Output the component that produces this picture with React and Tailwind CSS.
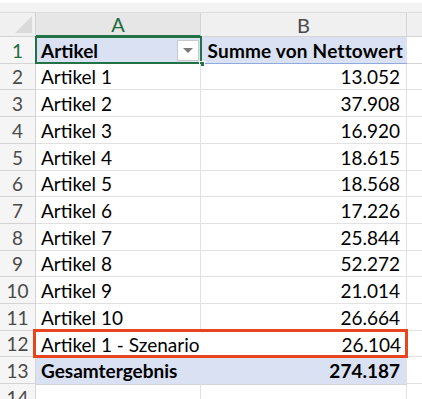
import React from 'react';

const rows = [
  ['Artikel 1', '13.052'],
  ['Artikel 2', '37.908'],
  ['Artikel 3', '16.920'],
  ['Artikel 4', '18.615'],
  ['Artikel 5', '18.568'],
  ['Artikel 6', '17.226'],
  ['Artikel 7', '25.844'],
  ['Artikel 8', '52.272'],
  ['Artikel 9', '21.014'],
  ['Artikel 10', '26.664'],
  ['Artikel 1 - Szenario', '26.104'],
];

// row heights measured from the sheet (rows 1..13)
const heights = [27, 26, 27, 27, 27, 26, 27, 27, 26, 27, 27, 26, 27];

function RowHead({ n, h, active }) {
  return (
    <div
      className={`flex items-center justify-center text-[19px] bg-[#f5f5f5] border-b border-r border-[#d4d4d4] ${active ? 'text-[#1e6b3f]' : 'text-[#4a4a4a]'}`}
      style={{ height: h }}
    >
      {n}
    </div>
  );
}

export default function App() {
  return (
    <div className="w-[422px] h-[399px] overflow-hidden bg-white text-[19px] leading-none text-black" style={{ fontFamily: 'Lato, "Liberation Sans", sans-serif' }}>
      {/* strip above column headers */}
      <div className="h-[3px] bg-white" />
      <div className="h-[10px] bg-[#f3f3f3] border-b border-[#dcdcdc]" />

      {/* column headers */}
      <div className="grid grid-cols-[36px_165px_206px_15px] h-[24px] bg-[#f0f0f0] text-[20px]">
        <div className="relative border-r border-b border-[#d4d4d4]">
          <div className="absolute right-[3px] bottom-[3px] w-0 h-0 border-l-[17px] border-l-transparent border-b-[17px] border-b-[#dadada]" />
        </div>
        <div className="flex items-center justify-center bg-[#e6e6e6] text-[#1e6b3f] border-r border-[#d4d4d4] border-b-2 border-b-[#217346]">A</div>
        <div className="flex items-center justify-center text-[#4a4a4a] border-r border-b border-[#d4d4d4]">B</div>
        <div className="border-b border-[#d4d4d4]" />
      </div>

      <div className="grid grid-cols-[36px_165px_206px_15px]">
        {/* row 1: pivot header */}
        <RowHead n={1} h={heights[0]} active />
        <div className="relative flex items-center pl-[5px] font-bold bg-[#d9e1f2] border-b border-[#8ea9db]" style={{ height: heights[0] }}>
          Artikel
          <div className="absolute right-[2px] top-[3px] w-[22px] h-[21px] bg-white border border-[#c8c8c8] flex items-center justify-center">
            <div className="w-0 h-0 border-l-[5px] border-r-[5px] border-t-[5px] border-l-transparent border-r-transparent border-t-[#7a7a7a]" />
          </div>
          <div className="absolute -left-px -top-px -right-px -bottom-px border-2 border-[#217346]" />
          <div className="absolute -right-[4px] -bottom-[4px] w-[6px] h-[6px] bg-[#217346] border border-white" />
        </div>
        <div className="flex items-center justify-end pr-[4px] font-bold bg-[#d9e1f2] border-b border-[#8ea9db] whitespace-nowrap tracking-[0.2px]" style={{ height: heights[0] }}>
          Summe von Nettowert
        </div>
        <div className="border-b border-[#d4d4d4]" style={{ height: heights[0] }} />

        {rows.map(([name, val], i) => {
          const h = heights[i + 1];
          const marked = i === rows.length - 1;
          return (
            <React.Fragment key={name}>
              <RowHead n={i + 2} h={h} />
              <div className={`relative flex items-center pl-[5px] whitespace-nowrap ${marked ? '' : 'border-b border-r border-[#e1e1e1]'}`} style={{ height: h }}>
                {name}
                {marked && (
                  <div className="absolute -left-[3px] top-[-2px] w-[375px] bottom-[-1px] border-[3px] border-[#e8441e] pointer-events-none" />
                )}
              </div>
              <div className={`flex items-center justify-end pr-[6px] ${marked ? '' : 'border-b border-r border-[#e1e1e1]'}`} style={{ height: h }}>
                {val}
              </div>
              <div className="border-b border-[#e1e1e1]" style={{ height: h }} />
            </React.Fragment>
          );
        })}

        {/* row 13: total */}
        <RowHead n={13} h={heights[12]} />
        <div className="flex items-center pl-[5px] font-bold bg-[#d9e1f2]" style={{ height: heights[12] }}>
          Gesamtergebnis
        </div>
        <div className="flex items-center justify-end pr-[6px] font-bold bg-[#d9e1f2] border-r border-[#e1e1e1]" style={{ height: heights[12] }}>
          274.187
        </div>
        <div className="border-b border-[#e1e1e1]" style={{ height: heights[12] }} />

        {/* row 14 */}
        <RowHead n={14} h={27} />
        <div className="border-b border-r border-[#e1e1e1] border-t border-t-[#d4d4d4]" style={{ height: 27 }} />
        <div className="border-b border-r border-[#e1e1e1] border-t border-t-[#d4d4d4]" style={{ height: 27 }} />
        <div className="border-b border-[#e1e1e1]" style={{ height: 27 }} />
      </div>
    </div>
  );
}
